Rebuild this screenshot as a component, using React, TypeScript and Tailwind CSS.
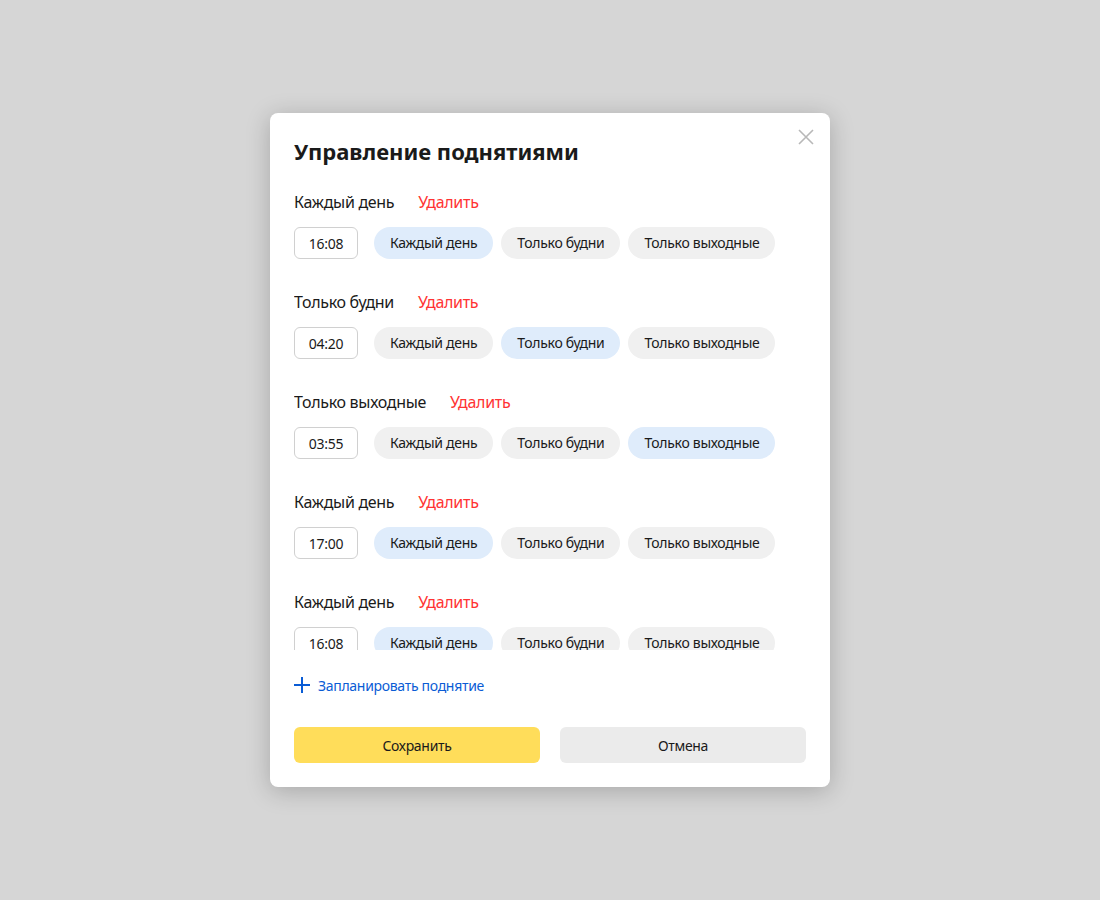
import React, { useState } from 'react';

type Mode = 'every' | 'weekdays' | 'weekends';

interface Raise {
  time: string;
  mode: Mode;
}

const modeLabels: Record<Mode, string> = {
  every: 'Каждый день',
  weekdays: 'Только будни',
  weekends: 'Только выходные',
};

const modes: Mode[] = ['every', 'weekdays', 'weekends'];

const initialRaises: Raise[] = [
  { time: '16:08', mode: 'every' },
  { time: '04:20', mode: 'weekdays' },
  { time: '03:55', mode: 'weekends' },
  { time: '17:00', mode: 'every' },
  { time: '16:08', mode: 'every' },
];

export default function App() {
  const [raises, setRaises] = useState<Raise[]>(initialRaises);

  const setMode = (idx: number, mode: Mode) =>
    setRaises((r) => r.map((item, i) => (i === idx ? { ...item, mode } : item)));

  return (
    <div
      className="w-[1100px] h-[900px] bg-[#d6d6d6] flex items-start justify-center pt-[113px] text-[#1a1a1a] tracking-[-0.3px]"
      style={{ fontFamily: '"Noto Sans", "Open Sans", sans-serif' }}
    >
      <div className="relative w-[560px] bg-white rounded-[8px] shadow-[0_4px_24px_rgba(0,0,0,0.22)] px-6 pt-6 pb-6">
        {/* Close */}
        <button className="absolute right-[16px] top-[16px] w-[16px] h-[16px] flex items-center justify-center">
          <svg width="16" height="16" viewBox="0 0 16 16" fill="none">
            <path d="M1 1L15 15M15 1L1 15" stroke="#b8b8b8" strokeWidth="1.6" />
          </svg>
        </button>

        {/* Title */}
        <h2 className="text-[22px] leading-[28px] font-bold tracking-normal">Управление поднятиями</h2>

        {/* List: last row is cut by the scroll area */}
        <div className="mt-[25px] h-[460px] overflow-hidden">
          {raises.map((r, idx) => (
            <div key={idx} className="mb-[31px]">
              <div className="flex items-center gap-6 h-6 text-[16px] leading-6">
                <span>{modeLabels[r.mode]}</span>
                <button className="text-[#ff3333]">Удалить</button>
              </div>
              <div className="mt-[13px] flex items-center">
                <div className="w-16 h-8 border border-[#d0d0d0] rounded-[6px] flex items-center justify-center text-[14px]">
                  {r.time}
                </div>
                <div className="ml-4 flex gap-2">
                  {modes.map((m) => (
                    <button
                      key={m}
                      onClick={() => setMode(idx, m)}
                      className={`h-8 px-4 rounded-full text-[14px] leading-8 ${
                        r.mode === m ? 'bg-[#dfecfb]' : 'bg-[#f0f0f0]'
                      }`}
                    >
                      {modeLabels[m]}
                    </button>
                  ))}
                </div>
              </div>
            </div>
          ))}
        </div>

        {/* Add */}
        <button
          onClick={() => setRaises((r) => [...r, { time: '12:00', mode: 'every' }])}
          className="mt-[25px] flex items-center gap-2 h-5 text-[14px] text-[#0a5cd5]"
        >
          <svg width="16" height="16" viewBox="0 0 16 16" fill="none">
            <path d="M8 0V16M0 8H16" stroke="#0a5cd5" strokeWidth="2" />
          </svg>
          <span>Запланировать поднятие</span>
        </button>

        {/* Actions */}
        <div className="mt-8 grid grid-cols-2 gap-5">
          <button className="h-9 rounded-[6px] bg-[#ffdd5a] text-[14px]">Сохранить</button>
          <button className="h-9 rounded-[6px] bg-[#ebebeb] text-[14px]">Отмена</button>
        </div>
      </div>
    </div>
  );
}
